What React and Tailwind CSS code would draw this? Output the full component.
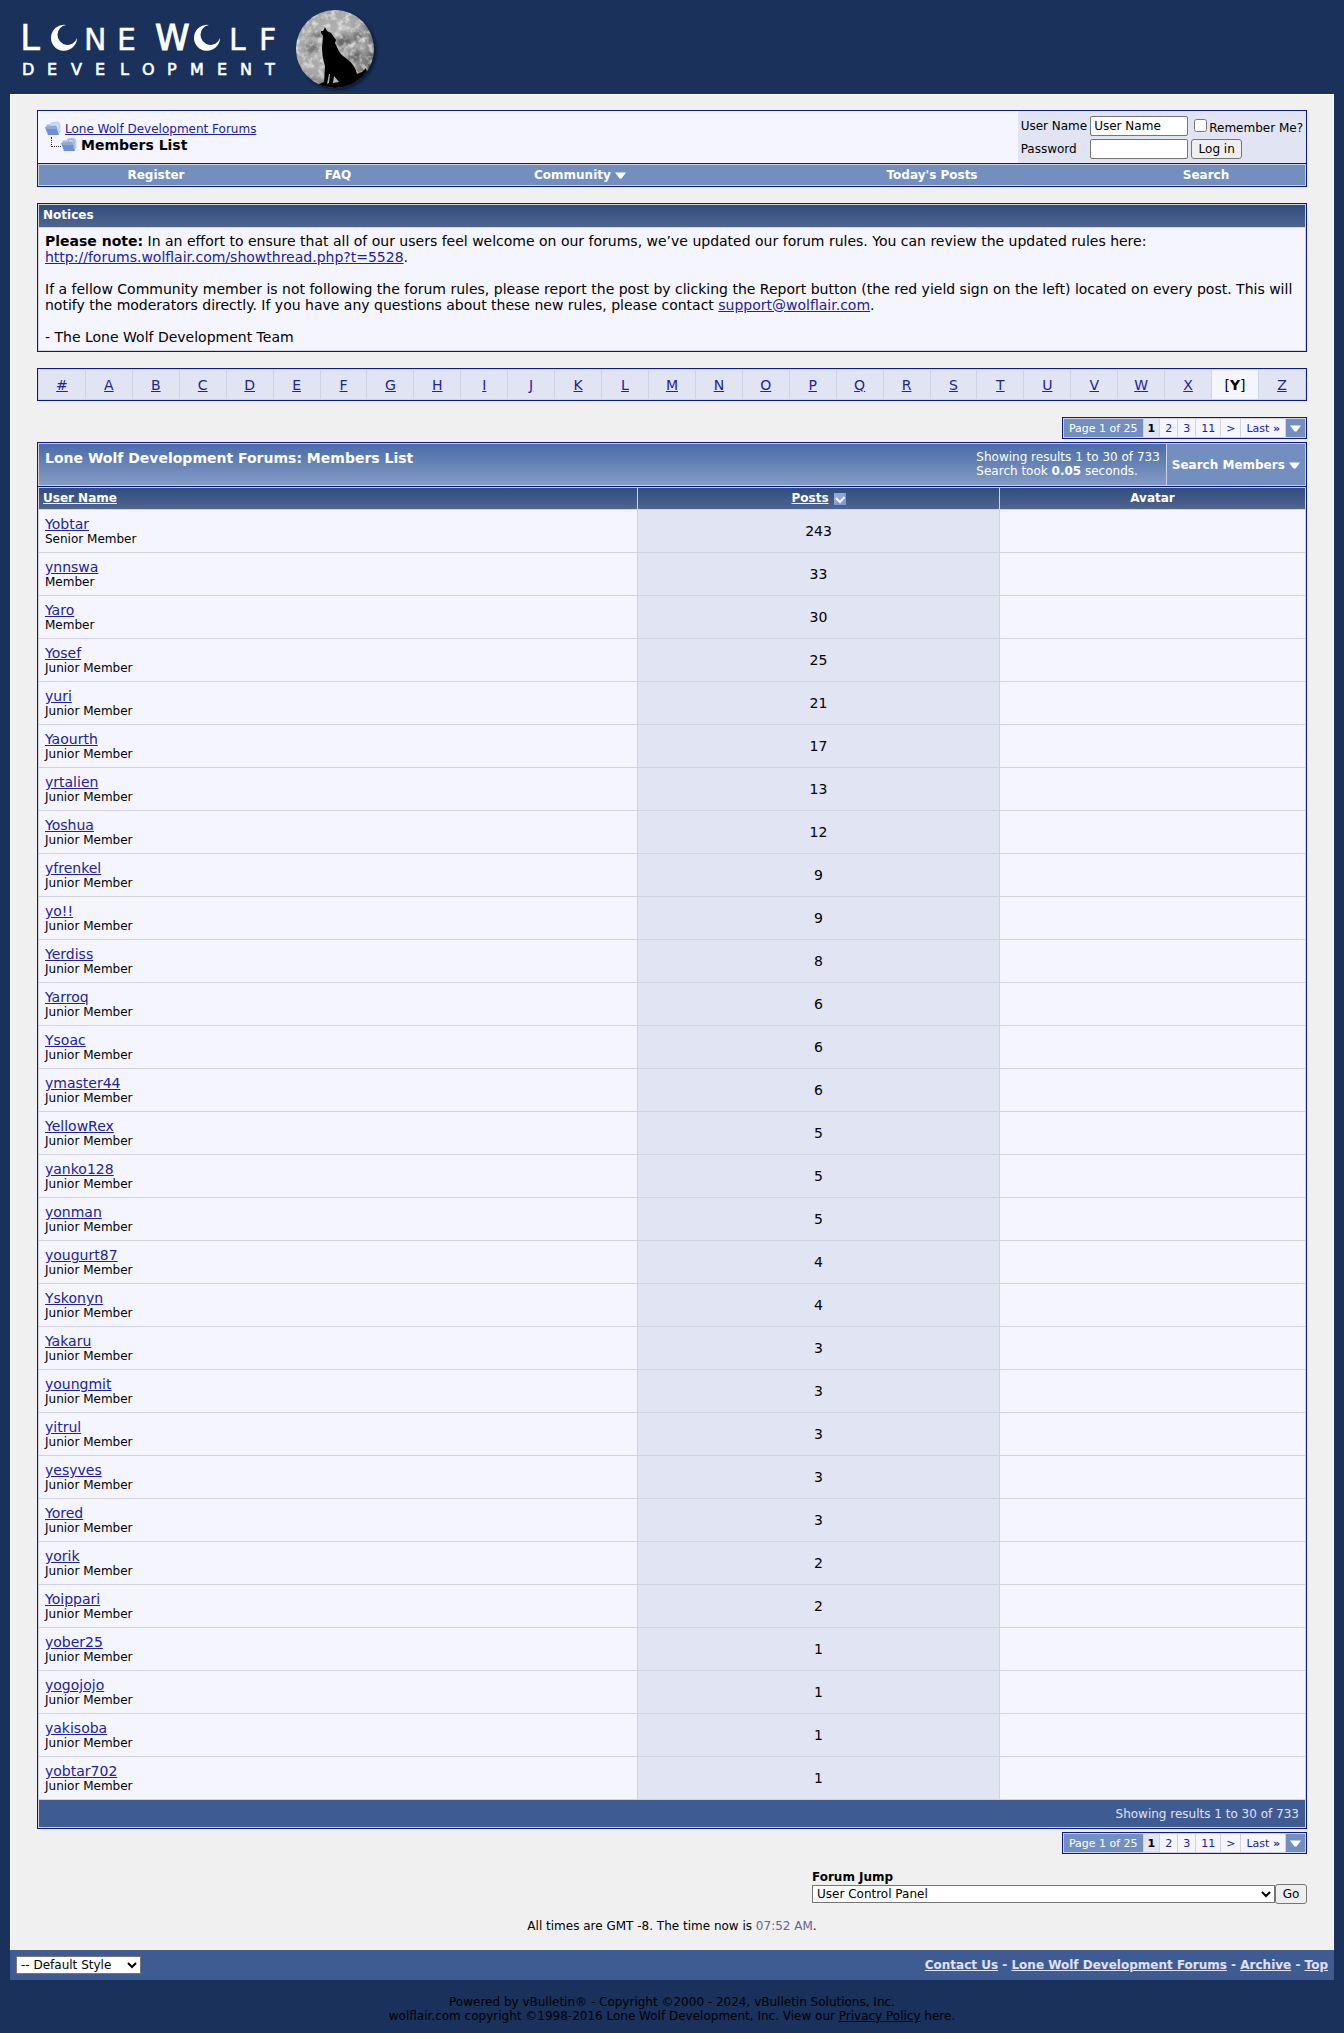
import React from "react";

const members = [
  ["Yobtar", "Senior Member", 243], ["ynnswa", "Member", 33], ["Yaro", "Member", 30],
  ["Yosef", "Junior Member", 25], ["yuri", "Junior Member", 21], ["Yaourth", "Junior Member", 17],
  ["yrtalien", "Junior Member", 13], ["Yoshua", "Junior Member", 12], ["yfrenkel", "Junior Member", 9],
  ["yo!!", "Junior Member", 9], ["Yerdiss", "Junior Member", 8], ["Yarroq", "Junior Member", 6],
  ["Ysoac", "Junior Member", 6], ["ymaster44", "Junior Member", 6], ["YellowRex", "Junior Member", 5],
  ["yanko128", "Junior Member", 5], ["yonman", "Junior Member", 5], ["yougurt87", "Junior Member", 4],
  ["Yskonyn", "Junior Member", 4], ["Yakaru", "Junior Member", 3], ["youngmit", "Junior Member", 3],
  ["yitrul", "Junior Member", 3], ["yesyves", "Junior Member", 3], ["Yored", "Junior Member", 3],
  ["yorik", "Junior Member", 2], ["Yoippari", "Junior Member", 2], ["yober25", "Junior Member", 1],
  ["yogojojo", "Junior Member", 1], ["yakisoba", "Junior Member", 1], ["yobtar702", "Junior Member", 1],
];

const letters = "#ABCDEFGHIJKLMNOPQRSTUVWXYZ".split("");
const link = "text-[#22229c] underline";
const control = "border border-[#767676] bg-white text-[12px] leading-[14px] text-black";

function Logo() {
  return (
    <svg className="block" width="380" height="94" viewBox="10 0 380 94" role="img" aria-label="Lone Wolf Development">
      <defs>
        <radialGradient id="moon" cx="42%" cy="42%" r="60%">
          <stop offset="0" stopColor="#b4b4b4" />
          <stop offset="0.75" stopColor="#a6a6a6" />
          <stop offset="1" stopColor="#5a5a5a" />
        </radialGradient>
        <filter id="soft" x="-40%" y="-40%" width="180%" height="180%">
          <feGaussianBlur stdDeviation="2" />
        </filter>
        <filter id="grain" x="0" y="0" width="100%" height="100%">
          <feTurbulence type="fractalNoise" baseFrequency="0.16" numOctaves="4" seed="7" />
          <feColorMatrix type="matrix" values="0 0 0 0 1  0 0 0 0 1  0 0 0 0 1  3 0 0 0 -1.3" />
        </filter>
        <clipPath id="disc"><circle cx="335" cy="49" r="39" /></clipPath>
      </defs>
      <g fill="#fff" stroke="#fff" strokeWidth="0.4" fontFamily="'DejaVu Sans', sans-serif">
        <text fontSize="36" x="20" y="50">L</text>
        <text fontSize="30" x="84 117" y="50">NE</text>
        <text fontSize="35" strokeWidth="1" x="155" y="50">W</text>
        <text fontSize="30" x="229 259" y="50">LF</text>
        <text fontSize="16" strokeWidth="0.6" x="22 47 71 95 120 142 167 190 217 240 265" y="75">DEVELOPMENT</text>
      </g>
      <path fill="#fff" d="M66 25 A13 13 0 1 0 77 38 A10 10 0 1 1 66 25Z" />
      <path fill="#fff" d="M209 25 A13 13 0 1 0 220 38 A10 10 0 1 1 209 25Z" />
      <circle cx="337" cy="51" r="38" fill="#061024" filter="url(#soft)" />
      <circle cx="335" cy="49" r="39" fill="url(#moon)" />
      <g clipPath="url(#disc)">
        <g fill="#505050" opacity="0.75" filter="url(#soft)">
          <ellipse cx="344" cy="42" rx="8" ry="7" />
          <ellipse cx="358" cy="37" rx="5" ry="5" />
          <ellipse cx="355" cy="57" rx="8" ry="7" />
          <ellipse cx="312" cy="48" rx="6" ry="5" />
          <ellipse cx="318" cy="36" rx="7" ry="3" />
        </g>
        <rect x="295" y="9" width="80" height="80" filter="url(#grain)" opacity="0.6" />
        <path fill="#000" d="M321 33 L321 31 L323 31 L325 27 L327 31 L331 33 L336 40 L335 43 L337 47 Q339 54 347 59 Q355 65 357 74 L362 72 L366 68 L368 76 L352 90 L318 90 L319 84 L324 82 L325 66 Q322 56 322 48 L323 36Z" />
        <path fill="#b5b5b5" d="M329 74 L330 74 L329 83 L327 84Z M334 76 L339 82 L333 83Z" />
      </g>
    </svg>
  );
}

function FolderIcon({ doc }) {
  return (
    <svg width="16" height="16" viewBox="0 0 16 16" className="shrink-0" aria-hidden="true">
      <path d="M6 2 L13 1 L15 3 V11 L12 14Z" fill="#c4dcf6" stroke="#9fbfe6" strokeWidth="0.6" />
      <path d="M1 4 L5 3 L7 5 L11 4 L13 14 L4 14Z" fill="#a9c0ec" />
      <path d="M0 6 L11 5 L14 14 L3 14Z" fill="#6f8ed8" />
      <path d="M0 6 L11 5 L12 8 L1 8Z" fill="#8fa9e4" />
      {doc && <path d="M7 8 V5 A3 3 0 0 1 13 5 V12" fill="none" stroke="#a3a3bd" strokeWidth="1.2" />}
    </svg>
  );
}

function Arrow() {
  return (
    <svg width="11" height="7" viewBox="0 0 11 7" className="inline-block" aria-hidden="true">
      <path d="M0 0.5 H11 L6.5 6.5 H4.5Z" fill="#fff" />
    </svg>
  );
}

function PageNav() {
  const cell = "flex items-center bg-[#f5f5ff] px-[5px] text-[#22229c]";
  return (
    <nav aria-label="Pages" className="ml-auto flex h-[22px] w-fit gap-px border border-[#0b198c] bg-[#d1d1e1] p-px text-[11px] leading-[13px]">
      <span className="flex items-center bg-[#738fbf] px-[5px] text-white">Page 1 of 25</span>
      <b className="flex items-center bg-[#e1e4f2] px-[4px] text-black">1</b>
      <a href="#p2" className={cell}>2</a>
      <a href="#p3" className={cell}>3</a>
      <a href="#p11" className={cell}>11</a>
      <a href="#next" className={cell}>&gt;</a>
      <a href="#last" className={cell}><span>Last <b>»</b></span></a>
      <button aria-label="Go to page" className="flex items-center bg-[#738fbf] px-[4px]"><Arrow /></button>
    </nav>
  );
}

const thead = "bg-linear-to-b from-[#304d7f] to-[#50658f] text-[12px] leading-[13px] font-bold text-white";

export default function App() {
  return (
    <div className="bg-[#1a315c] px-[10px] font-['DejaVu_Sans',sans-serif] text-[14px] leading-4 text-black">
      <header><a href="#home" className="block w-fit"><Logo /></a></header>
      <main className="border border-b-0 border-white bg-[#f0f0f0] px-[26px] pt-[15px] pb-[17px]">
        <div className="border border-[#0b198c] bg-[#d1d1e1]">
          <div className="flex min-h-[52px] bg-[#f5f5ff]">
            <div className="flex-1 px-[7px] pt-[10px]">
              <div className="flex h-4 items-center gap-[4px] text-[12px]">
                <FolderIcon /><a href="#forums" className={link}>Lone Wolf Development Forums</a>
              </div>
              <div className="flex h-4 items-center">
                <span className="mb-[6px] ml-[6px] h-[10px] w-[10px] border-b border-l border-dotted border-[#303030]" />
                <FolderIcon doc />
                <strong className="ml-[4px]">Members List</strong>
              </div>
            </div>
            <form className="grid grid-cols-[auto_auto_auto] content-center items-center gap-x-[3px] gap-y-[3px] bg-[#e1e4f2] px-[3px] text-[12px] leading-[14px]">
              <label htmlFor="user">User Name</label>
              <input id="user" defaultValue="User Name" className={`${control} h-5 w-[98px] rounded-[2px] px-[3px]`} />
              <label className="flex items-center gap-[2px] pl-[3px]">
                <input type="checkbox" className="m-0 size-[13px]" /><span className="pt-[5px]">Remember Me?</span>
              </label>
              <label htmlFor="pass">Password</label>
              <input id="pass" type="password" className={`${control} h-5 w-[98px] rounded-[2px] px-[3px]`} />
              <button type="button" className="h-5 w-[51px] rounded-[3px] border border-[#767676] bg-[#efefef]">Log in</button>
            </form>
          </div>
          <nav className="border-t border-[#0b198c]">
            <div className="m-px grid h-5 grid-cols-[234fr_130fr_354fr_350fr_198fr] items-center bg-[#738fbf] text-center text-[12px] leading-[13px] font-bold text-white">
              <a href="#register">Register</a>
              <a href="#faq">FAQ</a>
              <a href="#community">Community <Arrow /></a>
              <a href="#today">Today's Posts</a>
              <a href="#search">Search</a>
            </div>
          </nav>
        </div>

        <section className="mt-4 border border-[#0b198c] bg-[#d1d1e1] p-px">
          <h2 className={`${thead} px-[4px] pt-[4px] pb-[5px]`}>Notices</h2>
          <div className="mt-px bg-[#f5f5ff] px-[6px] py-[5px]">
            <p><b>Please note:</b> In an effort to ensure that all of our users feel welcome on our forums, we’ve updated our forum rules. You can review the updated rules here: <br /><a href="#rules" className={link}>http://forums.wolflair.com/showthread.php?t=5528</a>.</p>
            <p className="mt-4">If a fellow Community member is not following the forum rules, please report the post by clicking the Report button (the red yield sign on the left) located on every post. This will notify the moderators directly. If you have any questions about these new rules, please contact <a href="#support" className={link}>support@wolflair.com</a>.</p>
            <p className="mt-4">- The Lone Wolf Development Team</p>
          </div>
        </section>

        <nav aria-label="Members by letter" className="mt-4 flex h-[33px] gap-px border border-[#0b198c] bg-[#d1d1e1] p-px">
          {letters.map((l) => l === "Y" ? (
            <span key={l} className="flex flex-1 items-center justify-center bg-[#f5f5ff]">[<b>Y</b>]</span>
          ) : (
            <a key={l} href={"#" + l} className="flex flex-1 items-center justify-center bg-[#e1e4f2] text-[#22229c] underline">{l}</a>
          ))}
        </nav>

        <div className="mt-4"><PageNav /></div>

        <section className="mt-[3px] border border-[#0b198c] bg-[#d1d1e1]">
          <div className="m-px flex h-[41px] gap-px">
            <div className="flex flex-1 justify-between bg-linear-to-b from-[#4b6ca9] to-[#849cc4] px-[6px] text-white">
              <h1 className="pt-[6px] font-bold">Lone Wolf Development Forums: Members List</h1>
              <p className="pt-[6px] text-[12px] leading-[14px]">Showing results 1 to 30 of 733<br />Search took <b>0.05</b> seconds.</p>
            </div>
            <button className="bg-[#738fbf] px-[5px] text-[12px] leading-[14px] font-bold text-white">Search Members <Arrow /></button>
          </div>
          <table className="w-full table-fixed border-separate border-spacing-px border-t border-[#0b198c]">
            <colgroup><col /><col className="w-[361px]" /><col className="w-[305px]" /></colgroup>
            <thead>
              <tr className="h-[21px]">
                <th className={`${thead} px-[4px] text-left`}><a href="#name" className="underline">User Name</a></th>
                <th className={thead}>
                  <span className="inline-flex items-center gap-[5px]"><a href="#posts" className="underline">Posts</a>
                    <svg width="12" height="12" viewBox="0 0 12 12" aria-hidden="true"><rect width="12" height="12" fill="#7d9bd3" /><path d="M0 0H12L0 12Z" fill="#a2b8e2" opacity=".5" /><path d="M2 5 L6 9 L10.5 4" fill="none" stroke="#fff" strokeWidth="2" /></svg>
                  </span>
                </th>
                <th className={thead}>Avatar</th>
              </tr>
            </thead>
            <tbody>
              {members.map(([name, rank, posts]) => (
                <tr key={name} className="h-[42px]">
                  <td className="bg-[#f5f5ff] px-[6px]">
                    <a href={"#" + name} className={`${link} block w-fit`}>{name}</a>
                    <div className="text-[12px] leading-[14px]">{rank}</div>
                  </td>
                  <td className="bg-[#e1e4f2] text-center">{posts}</td>
                  <td className="bg-[#f5f5ff]" />
                </tr>
              ))}
            </tbody>
            <tfoot>
              <tr className="h-[27px]"><td colSpan={3} className="bg-[#3e5c92] px-[6px] text-right text-[12px] leading-[14px] text-[#e0e0f6]">Showing results 1 to 30 of 733</td></tr>
            </tfoot>
          </table>
        </section>

        <div className="mt-[3px]"><PageNav /></div>

        <form className="mt-4 ml-auto w-[495px] max-w-full text-[12px] leading-[14px]">
          <label htmlFor="jump" className="block font-bold">Forum Jump</label>
          <div className="flex items-center">
            <select id="jump" className={`${control} h-[18px] min-w-0 flex-1`}><option>User Control Panel</option></select>
            <button type="button" className="h-5 w-8 rounded-[3px] border border-[#767676] bg-[#efefef]">Go</button>
          </div>
        </form>
        <p className="mt-[15px] text-center text-[12px] leading-[14px]">All times are GMT -8. The time now is <span className="text-[#666686]">07:52 AM</span>.</p>
      </main>
      <div className="flex h-[30px] items-center justify-between bg-[#3e5c92] px-[6px] text-[12px] leading-[14px] font-bold text-[#e0e0f6]">
        <select aria-label="Style" className={`${control} h-[18px] w-[125px] font-normal`}><option>-- Default Style</option></select>
        <div>
          <a href="#contact" className="underline">Contact Us</a> - <a href="#forums" className="underline">Lone Wolf Development Forums</a> - <a href="#archive" className="underline">Archive</a> - <a href="#top" className="underline">Top</a>
        </div>
      </div>
      <footer className="pt-[15px] pb-[11px] text-center text-[12px] leading-[14px]">
        Powered by vBulletin® - Copyright ©2000 - 2024, vBulletin Solutions, Inc.<br />
        wolflair.com copyright ©1998-2016 Lone Wolf Development, Inc. View our <a href="#privacy" className="underline">Privacy Policy</a> here.
      </footer>
    </div>
  );
}
